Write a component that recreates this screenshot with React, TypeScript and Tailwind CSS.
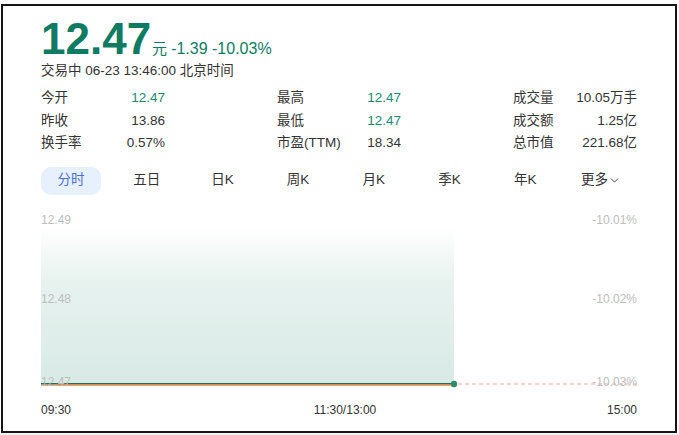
import { ChevronDown } from 'lucide-react'

const STATS = [
  [
    { label: '今开', value: '12.47', green: true },
    { label: '昨收', value: '13.86' },
    { label: '换手率', value: '0.57%' },
  ],
  [
    { label: '最高', value: '12.47', green: true },
    { label: '最低', value: '12.47', green: true },
    { label: '市盈(TTM)', value: '18.34' },
  ],
  [
    { label: '成交量', value: '10.05万手' },
    { label: '成交额', value: '1.25亿' },
    { label: '总市值', value: '221.68亿' },
  ],
]

const TABS = ['分时', '五日', '日K', '周K', '月K', '季K', '年K']

const FONT = {
  fontFamily: '"Liberation Sans", Arial, "Noto Sans CJK SC", sans-serif',
}

function Chart() {
  return (
    <div className="relative h-[190px] w-full">
      <svg width="596" height="190" className="absolute left-0 top-0">
        <defs>
          <linearGradient id="fill" x1="0" y1="0" x2="0" y2="1">
            <stop offset="0" stopColor="#ffffff" />
            <stop offset="0.35" stopColor="#e7f2ef" />
            <stop offset="1" stopColor="#d8eae5" />
          </linearGradient>
        </defs>
        <rect x="0" y="26" width="413" height="157" fill="url(#fill)" />
        <line x1="0" y1="184" x2="413" y2="184" stroke="#e8823a" strokeWidth="1.6" />
        <line x1="0" y1="182.6" x2="413" y2="182.6" stroke="#2d6a56" strokeWidth="1.2" />
        <line
          x1="417"
          y1="183"
          x2="596"
          y2="183"
          stroke="#f3a6a6"
          strokeWidth="1"
          strokeDasharray="4 3"
        />
        <circle cx="413" cy="183" r="3.2" fill="#2f8a6e" />
      </svg>
      <span className="absolute left-0 top-[12px] text-[12px] leading-[14px] text-[#bdbdbd]">12.49</span>
      <span className="absolute left-0 top-[91px] text-[12px] leading-[14px] text-[#bdbdbd]">12.48</span>
      <span className="absolute left-0 top-[174px] text-[12px] leading-[14px] text-[#bdbdbd]">12.47</span>
      <span className="absolute right-0 top-[12px] text-[12px] leading-[14px] text-[#bdbdbd]">-10.01%</span>
      <span className="absolute right-0 top-[91px] text-[12px] leading-[14px] text-[#bdbdbd]">-10.02%</span>
      <span className="absolute right-0 top-[174px] text-[12px] leading-[14px] text-[#bdbdbd]">-10.03%</span>
    </div>
  )
}

export default function App() {
  return (
    <div className="h-[435px] w-[679px] bg-[#f2f2f2]" style={FONT}>
      <div className="h-[433px] bg-white pl-[1px] pr-[2px] pt-[4px]">
        <div className="h-[429px] border-2 border-[#161616] px-[38px] pt-[11px] text-[#333]">
          <div className="flex items-baseline">
            <span className="text-[44px] font-bold leading-[44px] text-[#0f7b63]">12.47</span>
            <span className="ml-[1px] text-[15px] text-[#0f7b63]">元</span>
            <span className="ml-[4px] text-[16px] text-[#0f7b63]">-1.39 -10.03%</span>
          </div>
          <div className="text-[13.5px] leading-[20px]">交易中 06-23 13:46:00 北京时间</div>

          <div className="mt-[6px] flex justify-between text-[13.5px]">
            {STATS.map((col, i) => (
              <div key={i} className="flex w-[124px] flex-col">
                {col.map((s) => (
                  <div key={s.label} className="flex h-[22.5px] items-center justify-between">
                    <span>{s.label}</span>
                    <span className={s.green ? 'text-[#1a8a73]' : ''}>{s.value}</span>
                  </div>
                ))}
              </div>
            ))}
          </div>

          <div className="mt-[12px] flex w-[590px] justify-between text-[13.5px]">
            {TABS.map((t, i) => (
              <div
                key={t}
                className={
                  i === 0
                    ? 'flex h-[28px] w-[60px] items-center justify-center rounded-[10px] bg-[#e7f0fd] text-[#4a6fd6]'
                    : 'flex h-[28px] w-[60px] items-center justify-center'
                }
              >
                {t}
              </div>
            ))}
            <div className="flex h-[28px] w-[60px] items-center justify-center">
              更多
              <ChevronDown size={13} strokeWidth={1.5} />
            </div>
          </div>

          <div className="mt-[6px]">
            <Chart />
          </div>
          <div className="mt-[11px] flex justify-between text-[12px] leading-[16px]">
            <span>09:30</span>
            <span className="mr-[-12px]">11:30/13:00</span>
            <span>15:00</span>
          </div>
        </div>
      </div>
    </div>
  )
}
